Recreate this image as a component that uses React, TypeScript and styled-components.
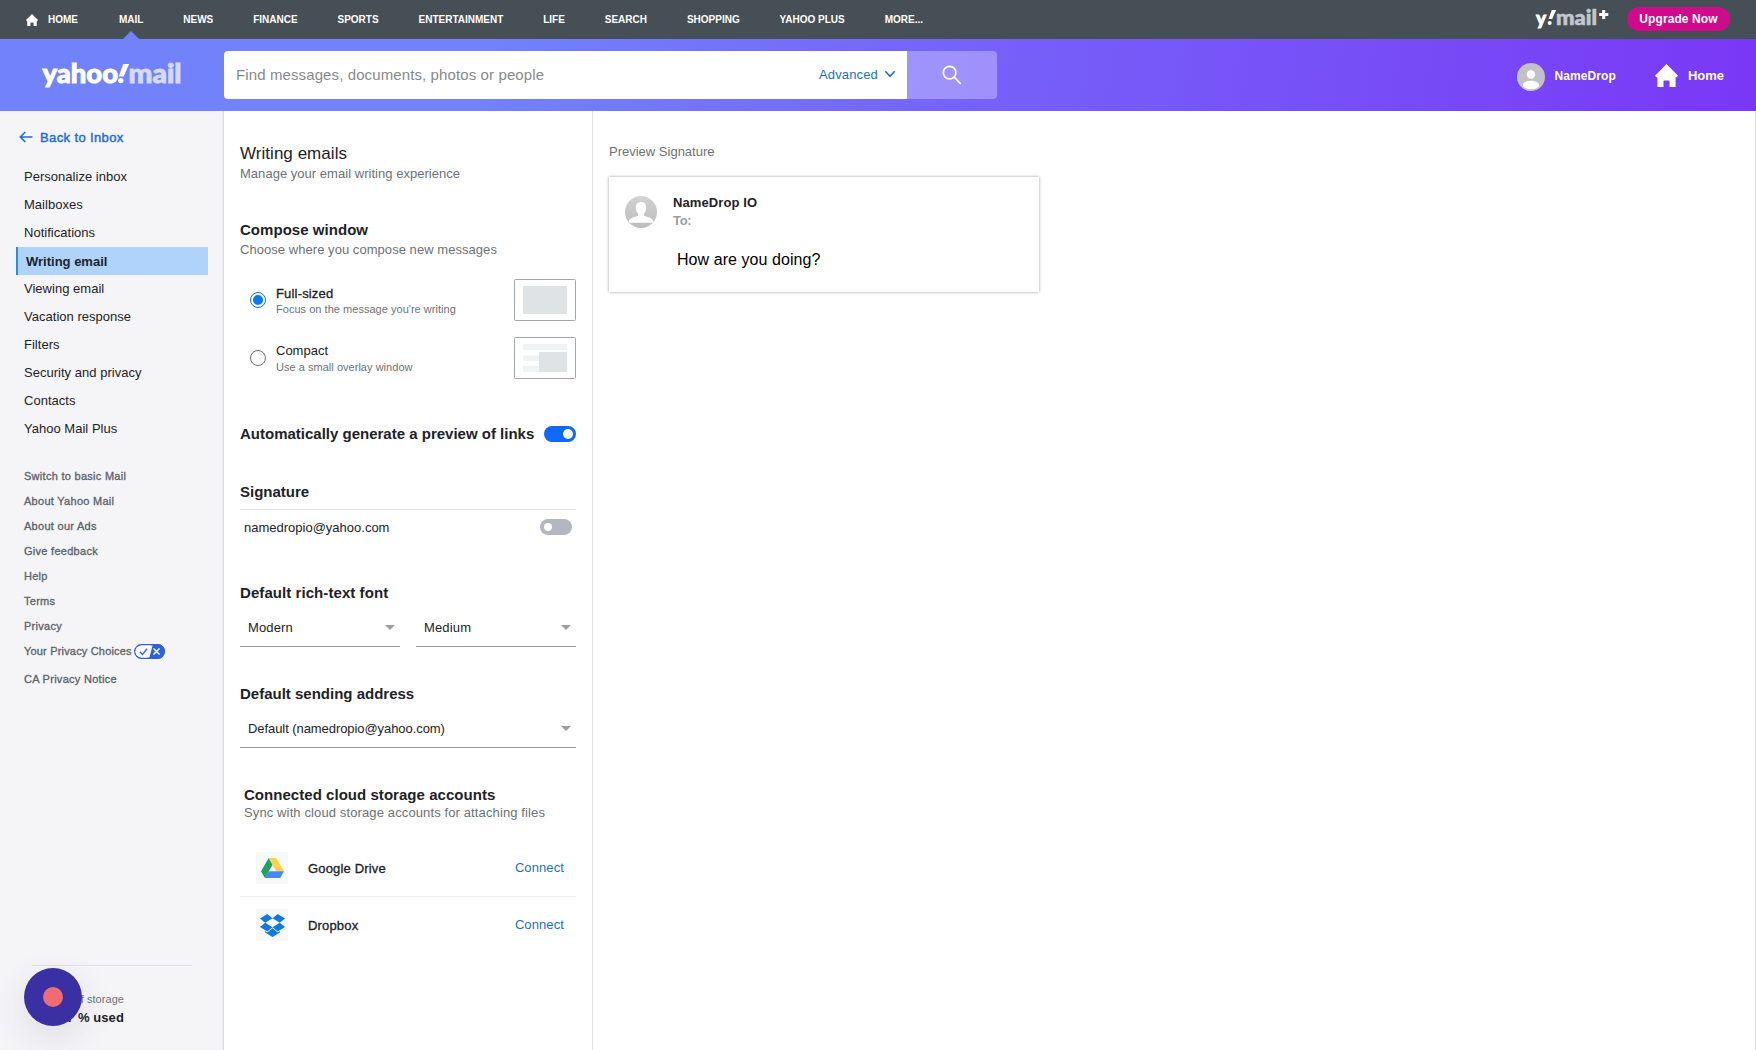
import React from "react";
import styled, { createGlobalStyle, css } from "styled-components";

const Global = createGlobalStyle`
  * { box-sizing: border-box; }
  html, body { margin: 0; padding: 0; }
  body {
    font-family: "Liberation Sans", Arial, sans-serif;
    font-size: 13px;
    color: #1d2228;
    background: #fff;
    overflow: hidden;
  }
  a { color: inherit; text-decoration: none; }
  h1, h2, p { margin: 0; }
`;

const medium = css`
  font-weight: 400;
  letter-spacing: 0.17px;
  -webkit-text-stroke: 0.32px currentColor;
`;

const Page = styled.div`
  width: 1756px;
  height: 1050px;
  display: flex;
  flex-direction: column;
`;

/* ---------- network bar ---------- */
const NetworkBar = styled.nav`
  height: 39px;
  flex: none;
  background: #464e56;
  color: #fff;
  display: flex;
  align-items: center;
  padding: 0 26px;
`;
const NetworkLinks = styled.div`
  display: flex;
  height: 39px;
  gap: 39.900px;
  margin-left: 10px;
`;
const NetworkLink = styled.a<{ $active?: boolean }>`
  position: relative;
  line-height: 39px;
  font-size: 10px;
  font-weight: 700;
  white-space: nowrap;
  &:first-child {
    margin-right: 1px;
  }
  ${(p) =>
    p.$active &&
    css`
      &::after {
        content: "";
        position: absolute;
        bottom: 0;
        left: 50%;
        margin-left: -8px;
        border: 8px solid transparent;
        border-top: 0;
        border-bottom-color: #7282fb;
      }
    `}
`;
const PlusLogo = styled.div`
  margin-left: auto;
  display: flex;
  height: 31px;
  margin-right: 17px;
`;
const Upgrade = styled.a`
  height: 24px;
  width: 103px;
  margin-bottom: 1px;
  text-align: center;
  line-height: 24px;
  border-radius: 12px;
  background: #cf0a8b;
  font-size: 12px;
  font-weight: 700;
  letter-spacing: 0.1px;
`;

/* ---------- header ---------- */
const Header = styled.header`
  height: 72px;
  flex: none;
  display: flex;
  align-items: center;
  color: #fff;
  background: linear-gradient(100deg, #7282fb 0%, #7282fb 28%, #765ff9 58%, #7749f6 83%, #7a37f6 100%);
`;
const LogoLink = styled.a`
  width: 224px;
  flex: none;
  height: 72px;
  padding: 16px 0 0 40px;
`;
const Search = styled.div`
  display: flex;
  width: 773px;
  height: 48px;
  border-radius: 4px;
  overflow: hidden;
`;
const SearchField = styled.div`
  flex: 1;
  background: #fff;
  display: flex;
  align-items: center;
  padding: 0 11px 2px 12px;
`;
const Placeholder = styled.span`
  flex: 1;
  font-size: 15px;
  letter-spacing: 0.11px;
  color: #878a8c;
`;
const Advanced = styled.a`
  color: #1a6fcb;
  display: flex;
  align-items: center;
  gap: 6px;
  letter-spacing: 0.15px;
`;
const SearchButton = styled.div`
  width: 90px;
  background: rgba(255, 255, 255, 0.3);
  display: flex;
  align-items: center;
  justify-content: center;
`;
const Account = styled.a`
  margin-left: auto;
  display: flex;
  align-items: center;
  gap: 9px;
  font-size: 12px;
  font-weight: 700;
  letter-spacing: 0.1px;
  padding-top: 3px;
`;
const AccountName = styled.span`
  margin-top: -1px;
`;
const HomeLink = styled.a`
  display: flex;
  align-items: center;
  gap: 10px;
  font-weight: 700;
  margin: 0 32px 0 39px;
`;

/* ---------- body ---------- */
const Body = styled.div`
  flex: 1;
  display: flex;
  min-height: 0;
`;
const Sidebar = styled.aside`
  width: 224px;
  flex: none;
  background: #f5f5f8;
  border-right: 1px solid #dcdde1;
  box-shadow: inset -1px 0 1px #e9eaed;
  padding: 15px 15px 0 16px;
  display: flex;
  flex-direction: column;
`;
const Back = styled.a`
  ${medium};
  letter-spacing: 0.38px;
  -webkit-text-stroke-width: 0.45px;
  color: #1d6bea;
  display: flex;
  align-items: center;
  gap: 7px;
  height: 22px;
  padding-left: 3px;
`;
const NavList = styled.div`
  margin-top: 15px;
  display: flex;
  flex-direction: column;
`;
const NavItem = styled.a<{ $active?: boolean }>`
  height: 28px;
  line-height: 28px;
  padding-left: 8px;
  letter-spacing: 0.02px;
  ${(p) =>
    p.$active &&
    css`
      background: #afd3fa;
      border-left: 2px solid #2b8be0;
      color: #17232f;
      font-weight: 700;
      letter-spacing: 0;
      line-height: 29px;
    `}
`;
const FooterLinks = styled.div`
  margin-top: 21px;
  padding-left: 8px;
  display: flex;
  flex-direction: column;
`;
const FooterLink = styled.a<{ $tall?: boolean }>`
  ${medium};
  font-size: 11px;
  letter-spacing: ${(p) => (p.$tall ? 0.18 : 0.28)}px;
  height: ${(p) => (p.$tall ? 28 : 25)}px;
  line-height: 25px;
  color: #5b636a;
  display: flex;
  align-items: flex-start;
  gap: 2px;
`;
const ChoicesIcon = styled.svg`
  margin-top: 5px;
`;
const Storage = styled.div`
  position: relative;
  margin: auto 0 0 16px;
  width: 160px;
  height: 85px;
  border-top: 1px solid #dfe1e5;
  padding: 25px 68px 0 0;
  text-align: right;
`;
const StorageNote = styled.div`
  font-size: 11px;
  line-height: 16px;
  letter-spacing: 0.05px;
  color: #6e7378;
`;
const StorageUsed = styled.div`
  margin-top: 1px;
  font-weight: 700;
  line-height: 20px;
  letter-spacing: 0.1px;
`;
const RecordBadge = styled.div`
  position: absolute;
  left: -8px;
  top: 2px;
  width: 58px;
  height: 58px;
  border-radius: 50%;
  background: #3a2fa3;
  display: flex;
  align-items: center;
  justify-content: center;
  box-shadow: 0 12px 36px rgba(60, 60, 70, 0.12);
  &::after {
    content: "";
    width: 20px;
    height: 20px;
    border-radius: 50%;
    background: #ee6d75;
  }
`;

const Settings = styled.main`
  width: 369px;
  flex: none;
  border-right: 1px solid #e0e4e9;
  padding: 32px 16px 0;
`;
const Title = styled.h1`
  font-size: 17px;
  font-weight: 400;
  line-height: 22px;
  letter-spacing: 0.04px;
`;
const Hint = styled.p<{ $spacing?: number }>`
  line-height: 18px;
  color: #6c7277;
  letter-spacing: ${(p) => p.$spacing ?? 0.03}px;
  white-space: nowrap;
`;
const Section = styled.section<{ $gap: number; $inset?: number }>`
  margin-top: ${(p) => p.$gap}px;
  padding-left: ${(p) => p.$inset ?? 0}px;
`;
const Heading = styled.h2<{ $lh?: number; $below?: number; $spacing?: number }>`
  font-size: 15px;
  font-weight: 700;
  line-height: ${(p) => p.$lh ?? 20}px;
  padding-bottom: ${(p) => p.$below ?? 0}px;
  letter-spacing: ${(p) => p.$spacing ?? 0}px;
  white-space: nowrap;
`;
const Option = styled.div<{ $gap: number }>`
  margin-top: ${(p) => p.$gap}px;
  height: 42px;
  display: flex;
  align-items: center;
  padding-left: 10px;
`;
const Radio = styled.span<{ $on?: boolean }>`
  width: 16px;
  height: 16px;
  border-radius: 50%;
  border: 1px solid ${(p) => (p.$on ? "#0b74e8" : "#6f6f72")};
  display: flex;
  align-items: center;
  justify-content: center;
  &::after {
    content: "";
    width: 10px;
    height: 10px;
    border-radius: 50%;
    background: ${(p) => (p.$on ? "#0877f2" : "transparent")};
  }
`;
const OptionText = styled.div`
  flex: 1;
  margin-left: 10px;
  padding-top: 2px;
  line-height: 16px;
`;
const OptionName = styled.div<{ $on?: boolean }>`
  height: 16px;
  ${(p) =>
    p.$on &&
    css`
      ${medium};
      line-height: 18px;
    `};
`;
const OptionHint = styled.div`
  font-size: 11px;
  color: #6c7277;
  letter-spacing: 0.03px;
`;
const Row = styled.div`
  display: flex;
  align-items: center;
  justify-content: space-between;
`;
const Toggle = styled.span<{ $on?: boolean }>`
  width: 32px;
  height: 16px;
  border-radius: 8px;
  background: ${(p) => (p.$on ? "#0f69ff" : "#b3b7bf")};
  display: flex;
  align-items: center;
  justify-content: ${(p) => (p.$on ? "flex-end" : "flex-start")};
  padding: 0 ${(p) => (p.$on ? 3 : 4)}px;
  &::after {
    content: "";
    width: ${(p) => (p.$on ? 10 : 8)}px;
    height: ${(p) => (p.$on ? 10 : 8)}px;
    border-radius: 50%;
    background: #fff;
  }
`;
const SignatureRow = styled(Row)`
  margin-top: 7px;
  border-top: 1px solid #dfe1e5;
  padding: 8px 4px 0;
  height: 27px;
`;
const SignatureAddress = styled.span`
  line-height: 18px;
  padding-top: 2px;
`;
const SelectRow = styled.div`
  display: flex;
  gap: 16px;
`;
const Select = styled.div<{ $spacing?: number }>`
  flex: 1;
  height: 44px;
  border-bottom: 1px solid #979ba0;
  padding: 6px 5px 0 8px;
  letter-spacing: ${(p) => p.$spacing ?? 0.15}px;
  display: flex;
  align-items: center;
  justify-content: space-between;
`;
const SelectValue = styled.span`
  margin-top: -1px;
`;
const Caret = styled.i`
  border: 5px solid transparent;
  border-top-color: #9b9da1;
  border-bottom: 0;
`;
const Services = styled.div`
  margin-top: 18px;
`;
const Service = styled.div`
  height: 56px;
  display: flex;
  align-items: center;
  padding: 0 12px 0 16px;
  & + & {
    border-top: 1px solid #eef0f2;
    height: 57px;
  }
`;
const ServiceIcon = styled.div`
  width: 32px;
  height: 32px;
  background: #f8f8f8;
  display: flex;
  align-items: center;
  justify-content: center;
`;
const ServiceName = styled.span`
  ${medium};
  flex: 1;
  margin-left: 20px;
  padding-top: 1px;
`;
const Connect = styled.a`
  color: #1a6fcb;
  padding-bottom: 1px;
  letter-spacing: 0.1px;
`;

const Preview = styled.section`
  flex: 1;
  border-right: 1px solid #e0e0e4;
  padding: 32px 16px 0;
`;
const Card = styled.div`
  margin-top: 16px;
  width: 430px;
  height: 115px;
  background: #fff;
  box-shadow: 0 0 3px rgba(0, 0, 0, 0.38);
  padding: 19px 16px 0;
  display: flex;
  gap: 16px;
`;
const CardName = styled.div`
  font-weight: 700;
  line-height: 18px;
  margin-top: -2px;
  letter-spacing: 0.1px;
`;
const CardTo = styled.div`
  font-weight: 700;
  line-height: 18px;
  color: #9b9ea3;
  letter-spacing: -0.3px;
`;
const CardMessage = styled.div`
  margin: 20px 0 0 4px;
  font-size: 16px;
  line-height: 20px;
  letter-spacing: 0.06px;
  color: #000;
`;

const HouseIcon = ({ w, h }: { w: number; h: number }) => (
  <svg width={w} height={h} viewBox="0 0 22 22" fill="#fff">
    <path d="M11 0 22 11.2l-1.4 1.5h-.9V22h-5.8v-5.2a1 1 0 0 0-1-1H9.100a1 1 0 0 0-1 1V22H2.300v-9.300h-.9L0 11.200z" />
  </svg>
);

const YahooMail = () => (
  <svg width="144" height="42" viewBox="0 0 144 42" fontFamily="Lato, sans-serif" fontWeight="900">
    <text x="2.500" y="28" fontSize="27" textLength="75.500" lengthAdjust="spacingAndGlyphs" fill="#fff" stroke="#fff" strokeWidth="0.9">yahoo</text>
    <path d="M83.200 9h5.900L83.700 21.500h-5z" fill="#fff" />
    <circle cx="80.800" cy="25.600" r="2.700" fill="#fff" />
    <text x="88.500" y="28" fontSize="27" textLength="53" lengthAdjust="spacingAndGlyphs" fill="#d5daff" stroke="#d5daff" strokeWidth="0.9">mail</text>
  </svg>
);

const YMailPlus = () => (
  <svg width="75" height="31" viewBox="0 0 75 31" fontFamily="Lato, sans-serif" fontWeight="900">
    <text x="1" y="21" fontSize="19" fill="#fff" stroke="#fff" strokeWidth="0.8">y</text>
    <path d="M16.800 6h4.300l-3.900 9h-3.700z" fill="#fff" />
    <circle cx="14.700" cy="19" r="2" fill="#fff" />
    <text x="21" y="21" fontSize="20" textLength="41" lengthAdjust="spacingAndGlyphs" fill="#c3c7ca" stroke="#c3c7ca" strokeWidth="0.6">mail</text>
    <path d="M67.200 6h3v3h3.100v3h-3.100v3h-3v-3h-3V9h3z" fill="#fff" />
  </svg>
);

const AvatarSmall = () => (
  <svg width="28" height="28" viewBox="0 0 28 28">
    <defs><clipPath id="avS"><circle cx="14" cy="14" r="14" /></clipPath></defs>
    <g clipPath="url(#avS)">
      <rect width="28" height="28" fill="#c3c1c8" />
      <circle cx="14" cy="11.500" r="4.200" fill="#fff" />
      <ellipse cx="14" cy="22" rx="8.200" ry="4.300" fill="#fff" />
    </g>
  </svg>
);

const AvatarLarge = () => (
  <svg width="32" height="32" viewBox="0 0 32 32">
    <defs>
      <clipPath id="avL"><circle cx="16" cy="16" r="16" /></clipPath>
      <linearGradient id="avG" x1="0" y1="0" x2="0" y2="1">
        <stop offset="0" stopColor="#d2d2d2" /><stop offset="1" stopColor="#bcbcbc" />
      </linearGradient>
    </defs>
    <g clipPath="url(#avL)">
      <rect width="32" height="32" fill="url(#avG)" />
      <path d="M16 6c3.400 0 5.200 2.400 5.200 5.600 0 2.600-.9 4.800-2.200 6v2.200c3 1.300 8 2 8.800 4.400.4 1 .5 1.800.5 2.600H3.700c0-.8.1-1.600.5-2.600.8-2.400 5.800-3.100 8.800-4.400v-2.200c-1.300-1.200-2.200-3.400-2.200-6C10.800 8.400 12.600 6 16 6z" fill="#fff" />
    </g>
  </svg>
);

const FullThumb = () => (
  <svg width="62" height="42" viewBox="0 0 62 42">
    <rect x=".5" y=".5" width="61" height="41" rx="1" fill="#fff" stroke="#a3a7ac" />
    <rect x="9" y="7" width="44" height="28" rx="1" fill="#e0e3e6" />
  </svg>
);
const CompactThumb = () => (
  <svg width="62" height="42" viewBox="0 0 62 42">
    <rect x=".5" y=".5" width="61" height="41" rx="1" fill="#fff" stroke="#a3a7ac" />
    <path d="M9 7h44v6H9zM9 18.500h18V24H9zM9 29h18v6H9z" fill="#f0f2f5" />
    <rect x="25" y="15" width="28" height="20" rx="1" fill="#e0e3e6" />
  </svg>
);

const DriveIcon = () => (
  <svg width="23" height="20" viewBox="0 0 23 20">
    <path d="M7.700 0 0 13.300 3.900 20l7.700-13.300z" fill="#1da362" />
    <path d="M7.700 0h7.600L23 13.300h-7.700z" fill="#ffd04b" />
    <path d="M3.900 20 7.700 13.300H23L19.200 20z" fill="#4688f4" />
  </svg>
);
const DropboxIcon = () => (
  <svg width="25" height="23" viewBox="0 0 25 23" fill="#0f7be0">
    <path d="M7.300 0 12.500 4.200 5.200 8.700 0 4.600zM17.700 0 25 4.600 19.800 8.700 12.500 4.200zM0 12.900l5.200-4.200 7.300 4.500-5.200 4.300zM25 12.900l-5.200-4.200-7.300 4.500 5.200 4.300zM12.500 14.200l5.200 4.300 2.200-1.400v1.500L12.500 23l-7.400-4.400v-1.500l2.200 1.400z" />
  </svg>
);

const network = ["HOME", "MAIL", "NEWS", "FINANCE", "SPORTS", "ENTERTAINMENT", "LIFE", "SEARCH", "SHOPPING", "YAHOO PLUS", "MORE..."];
const nav = ["Personalize inbox", "Mailboxes", "Notifications", "Writing email", "Viewing email", "Vacation response", "Filters", "Security and privacy", "Contacts", "Yahoo Mail Plus"];
const footer = ["Switch to basic Mail", "About Yahoo Mail", "About our Ads", "Give feedback", "Help", "Terms", "Privacy", "Your Privacy Choices", "CA Privacy Notice"];

export default function App() {
  return (
    <Page>
      <Global />
      <NetworkBar>
        <HouseIcon w={12} h={12} />
        <NetworkLinks>
          {network.map((n) => (
            <NetworkLink key={n} $active={n === "MAIL"}>{n}</NetworkLink>
          ))}
        </NetworkLinks>
        <PlusLogo><YMailPlus /></PlusLogo>
        <Upgrade>Upgrade Now</Upgrade>
      </NetworkBar>

      <Header>
        <LogoLink><YahooMail /></LogoLink>
        <Search>
          <SearchField>
            <Placeholder>Find messages, documents, photos or people</Placeholder>
            <Advanced>
              Advanced
              <svg width="12" height="8" viewBox="0 0 12 8" fill="none" stroke="#1a6fcb" strokeWidth="1.600">
                <path d="M1.300 1.300 6 6.300l4.700-5" />
              </svg>
            </Advanced>
          </SearchField>
          <SearchButton>
            <svg width="20" height="20" viewBox="0 0 20 20" fill="none" stroke="#fff" strokeWidth="1.700">
              <circle cx="7.600" cy="7.600" r="6.300" />
              <path d="m12.200 12.200 6.600 6.800" />
            </svg>
          </SearchButton>
        </Search>
        <Account><AvatarSmall /><AccountName>NameDrop</AccountName></Account>
        <HomeLink><HouseIcon w={23} h={23} />Home</HomeLink>
      </Header>

      <Body>
        <Sidebar>
          <Back>
            <svg width="14" height="12" viewBox="0 0 14 12" fill="none" stroke="#1d6bea" strokeWidth="1.600">
              <path d="M6.300 1 1.300 6l5 5M1.300 6H13.500" />
            </svg>
            Back to Inbox
          </Back>
          <NavList>
            {nav.map((n) => (
              <NavItem key={n} $active={n === "Writing email"}>{n}</NavItem>
            ))}
          </NavList>
          <FooterLinks>
            {footer.map((f) => (
              <FooterLink key={f} $tall={f === "Your Privacy Choices"}>
                {f}
                {f === "Your Privacy Choices" && (
                  <ChoicesIcon width="31" height="15" viewBox="0 0 31 15">
                    <path d="M19 0h4.500a7.500 7.500 0 0 1 0 15H15z" fill="#2e62dd" />
                    <rect x=".8" y=".8" width="29.400" height="13.400" rx="6.700" fill="none" stroke="#2e62dd" strokeWidth="1.500" />
                    <path d="M7.500 1.500H17L13.500 13.500h-6a6 6 0 0 1 0-12z" fill="#fff" />
                    <path d="m5.800 7.800 2.700 2.700L13 4.800" fill="none" stroke="#2e62dd" strokeWidth="1.400" />
                    <path d="m19.500 4.500 6 6m0-6-6 6" stroke="#fff" strokeWidth="1.500" />
                  </ChoicesIcon>
                )}
              </FooterLink>
            ))}
          </FooterLinks>
          <Storage>
            <StorageNote>1 TB of storage</StorageNote>
            <StorageUsed>0.7 % used</StorageUsed>
            <RecordBadge />
          </Storage>
        </Sidebar>

        <Settings>
          <Title>Writing emails</Title>
          <Hint>Manage your email writing experience</Hint>

          <Section $gap={37}>
            <Heading $below={1} $spacing={0.04}>Compose window</Heading>
            <Hint $spacing={0.05}>Choose where you compose new messages</Hint>
            <Option $gap={20}>
              <Radio $on />
              <OptionText>
                <OptionName $on>Full-sized</OptionName>
                <OptionHint>Focus on the message you're writing</OptionHint>
              </OptionText>
              <FullThumb />
            </Option>
            <Option $gap={16}>
              <Radio />
              <OptionText>
                <OptionName>Compact</OptionName>
                <OptionHint>Use a small overlay window</OptionHint>
              </OptionText>
              <CompactThumb />
            </Option>
          </Section>

          <Section $gap={45}>
            <Row>
              <Heading>Automatically generate a preview of links</Heading>
              <Toggle $on />
            </Row>
          </Section>

          <Section $gap={38}>
            <Heading>Signature</Heading>
            <SignatureRow>
              <SignatureAddress>namedropio@yahoo.com</SignatureAddress>
              <Toggle />
            </SignatureRow>
          </Section>

          <Section $gap={47}>
            <Heading $spacing={0.07}>Default rich-text font</Heading>
            <SelectRow>
              <Select><SelectValue>Modern</SelectValue><Caret /></Select>
              <Select><SelectValue>Medium</SelectValue><Caret /></Select>
            </SelectRow>
          </Section>

          <Section $gap={37}>
            <Heading>Default sending address</Heading>
            <SelectRow>
              <Select $spacing={-0.07}><SelectValue>Default (namedropio@yahoo.com)</SelectValue><Caret /></Select>
            </SelectRow>
          </Section>

          <Section $gap={37} $inset={4}>
            <Heading $lh={19} $spacing={0.04}>Connected cloud storage accounts</Heading>
            <Hint $spacing={0.12}>Sync with cloud storage accounts for attaching files</Hint>
          </Section>
          <Services>
            <Service>
              <ServiceIcon><DriveIcon /></ServiceIcon>
              <ServiceName>Google Drive</ServiceName>
              <Connect>Connect</Connect>
            </Service>
            <Service>
              <ServiceIcon><DropboxIcon /></ServiceIcon>
              <ServiceName>Dropbox</ServiceName>
              <Connect>Connect</Connect>
            </Service>
          </Services>
        </Settings>

        <Preview>
          <Hint $spacing={0}>Preview Signature</Hint>
          <Card>
            <AvatarLarge />
            <div>
              <CardName>NameDrop IO</CardName>
              <CardTo>To:</CardTo>
              <CardMessage>How are you doing?</CardMessage>
            </div>
          </Card>
        </Preview>
      </Body>
    </Page>
  );
}
